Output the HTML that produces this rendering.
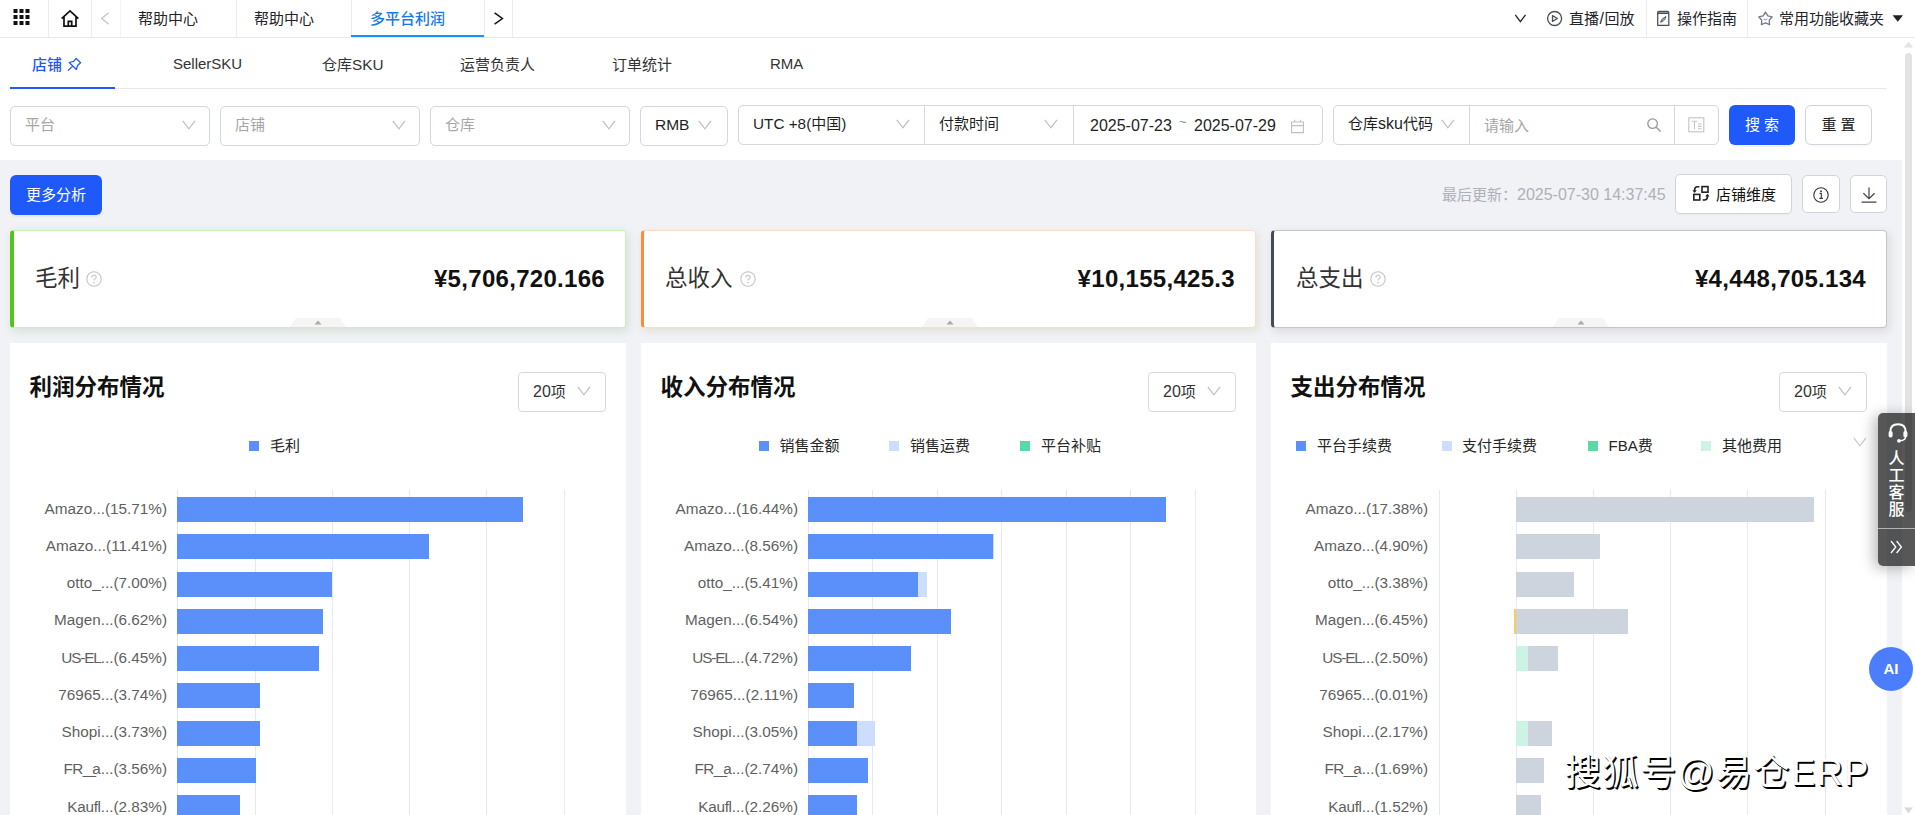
<!DOCTYPE html>
<html lang="zh-CN">
<head>
<meta charset="utf-8">
<title>多平台利润</title>
<style>
*{box-sizing:border-box;margin:0;padding:0}
html,body{width:1915px;height:815px;overflow:hidden;background:#f0f2f5;
  font-family:"Liberation Sans","Noto Sans CJK SC",sans-serif;color:#1f1f1f;font-size:15px}
.abs{position:absolute}
.lat{font-size:16px}
#root{position:relative;width:1915px;height:815px;overflow:hidden;background:#f0f2f5}
/* top bar */
#top{left:0;top:0;width:1915px;height:38px;background:#fff;border-bottom:1px solid #e8e8e8}
.vsep{position:absolute;top:0;width:1px;height:37px;background:#eaecf0}
.ttab{position:absolute;top:0;height:37px;line-height:37px;font-size:15px;color:#1f232b;white-space:nowrap}
/* white section */
#white{left:0;top:38px;width:1902px;height:122px;background:#fff}
.stab{position:absolute;top:48px;height:34px;line-height:34px;font-size:15px;color:#333;white-space:nowrap}
.sel{position:absolute;top:106px;height:40px;border:1px solid #d3d7de;border-radius:5px;background:#fff;font-size:15px;line-height:36px;white-space:nowrap}
.ph{color:#a6a6a6}
.chev{position:absolute;top:13px;width:14px;height:12px}
.btn{position:absolute;border-radius:6px;font-size:15px;text-align:center;white-space:nowrap}
/* cards */
.card{position:absolute;top:230px;height:98px;box-shadow:0 3px 8px rgba(0,0,0,.08);background:#fff;border-radius:4px;border:1px solid #ddd}
.card .lbl{position:absolute;left:21px;top:32px;font-size:22.5px;line-height:32px;color:#333;white-space:nowrap}
.card .val{position:absolute;right:20px;top:30px;font-size:24px;line-height:36px;font-weight:bold;color:#111;white-space:nowrap;letter-spacing:.3px}
.panel{position:absolute;top:343px;height:480px;background:#fff}
.panel h3{position:absolute;left:19.5px;top:29px;font-size:22.5px;line-height:32px;font-weight:bold;color:#111;white-space:nowrap}
.sel20{position:absolute;top:29px;width:88px;height:40px;border:1px solid #d9d9d9;border-radius:4px;font-size:15px;line-height:38px;padding-left:14px;color:#333}
.lg{position:absolute;top:432px;font-size:15px;line-height:28px;color:#262626;white-space:nowrap}
.lgsq{position:absolute;top:441px;width:10px;height:10px}
.yl{position:absolute;font-size:15.3px;line-height:20px;color:#5f5f5f;text-align:right;white-space:nowrap;width:160px}
.bar{position:absolute;height:25px}
.grid{position:absolute;top:490px;width:1px;height:330px;background:#e6e8ee}
.stab.lat{top:47px}
</style>
</head>
<body>
<div id="root">
<div id="top" class="abs">
<svg class="abs" style="left:13px;top:9px" width="17" height="16" viewBox="0 0 17 16"><g fill="#111"><rect x="0.5" y="0" width="4" height="4"/><rect x="6.5" y="0" width="4" height="4"/><rect x="12.5" y="0" width="4" height="4"/><rect x="0.5" y="6" width="4" height="4"/><rect x="6.5" y="6" width="4" height="4"/><rect x="12.5" y="6" width="4" height="4"/><rect x="0.5" y="12" width="4" height="4"/><rect x="6.5" y="12" width="4" height="4"/><rect x="12.5" y="12" width="4" height="4"/></g></svg>
<div class="vsep" style="left:48px"></div>
<svg class="abs" style="left:60px;top:9px" width="20" height="19" viewBox="0 0 20 19"><path d="M1.6 9.6 L10 1.8 L18.4 9.6 M4 8 V17.2 H16 V8 M8.3 17.2 V12.3 H11.7 V17.2" fill="none" stroke="#111" stroke-width="1.7" stroke-linejoin="miter"/></svg>
<div class="vsep" style="left:91px"></div>
<svg class="abs" style="left:100px;top:12px" width="10" height="13" viewBox="0 0 10 13"><path d="M8.7 0.8 L1.6 6.5 L8.7 12.2" fill="none" stroke="#c4c4c4" stroke-width="1.3"/></svg>
<div class="vsep" style="left:120px;background:#f5f5f5"></div>
<div class="ttab" style="left:138px">帮助中心</div>
<div class="vsep" style="left:236px"></div>
<div class="ttab" style="left:254px">帮助中心</div>
<div class="vsep" style="left:351px"></div>
<div class="ttab" style="left:370px;color:#1778ea;font-weight:500">多平台利润</div>
<div class="abs" style="left:351px;top:34.5px;width:133px;height:2.5px;background:#1890ff"></div>
<div class="vsep" style="left:484px"></div>
<svg class="abs" style="left:493px;top:12px" width="12" height="13" viewBox="0 0 12 13"><path d="M1.6 0.8 L9.4 6.5 L1.6 12.2" fill="none" stroke="#111" stroke-width="1.5"/></svg>
<div class="vsep" style="left:512px"></div>
<svg class="abs" style="left:1514px;top:14px" width="13" height="9" viewBox="0 0 13 9"><path d="M1.3 0.8 L6.4 7.6 L11.5 0.8" fill="none" stroke="#222" stroke-width="1.3"/></svg>
<svg class="abs" style="left:1546px;top:10px" width="17" height="17" viewBox="0 0 17 17"><circle cx="8.6" cy="8.5" r="7" fill="none" stroke="#4b4f58" stroke-width="1.35"/><path d="M6.5 5.6 L11.3 8.5 L6.5 11.4 Z" fill="none" stroke="#4b4f58" stroke-width="1.3" stroke-linejoin="round"/></svg>
<div class="ttab" style="left:1569px">直播<span style="padding:0 .5px 0 .5px;font-size:16px">/</span>回放</div>
<div class="vsep" style="left:1646px"></div>
<svg class="abs" style="left:1656px;top:10px" width="15" height="17" viewBox="0 0 15 17"><path d="M1.7 2.4 Q1.7 1.3 2.8 1.3 H11.6 Q12.8 1.3 12.8 2.4 V15.4 H1.7 Z" fill="none" stroke="#4b4f58" stroke-width="1.25"/><path d="M1.7 3.2 H12.8" stroke="#4b4f58" stroke-width="1.7"/><path d="M4.6 12.2 Q5 8.6 9.8 6.6 Q9.6 10.8 4.6 12.2 Z M4.6 12.2 L9.8 6.6" fill="none" stroke="#4b4f58" stroke-width="0.9"/></svg>
<div class="ttab" style="left:1677px">操作指南</div>
<div class="vsep" style="left:1747px"></div>
<svg class="abs" style="left:1757px;top:10px" width="17" height="17" viewBox="0 0 17 17"><path d="M8.5 2.0 L10.8 5.8 L15.2 6.8 L12.2 10.2 L12.6 14.7 L8.5 12.9 L4.4 14.7 L4.8 10.2 L1.8 6.8 L6.2 5.8 Z" fill="none" stroke="#777b84" stroke-width="1.3" stroke-linejoin="round"/><path d="M6.6 9 Q8.5 10.6 10.4 9" fill="none" stroke="#5c7cff" stroke-width="0.9"/></svg>
<div class="ttab" style="left:1779px">常用功能收藏夹</div>
<svg class="abs" style="left:1892px;top:15px" width="12" height="8" viewBox="0 0 12 8"><path d="M0.6 0.3 H11 L5.8 6.8 Z" fill="#222"/></svg>

</div>

<div id="white" class="abs"></div>
<div class="abs" style="left:10px;top:88px;width:1877px;height:1px;background:#e8e8e8"></div>
<div class="abs" style="left:10px;top:86.5px;width:105px;height:2.5px;background:#1f59fa"></div>
<div class="stab" style="left:32px;color:#1f59fa;font-weight:500">店铺</div>
<svg class="abs" style="left:67px;top:57px" width="15" height="15" viewBox="0 0 15 15"><path d="M9.2 1.5 L13.6 5.7 L10.5 8.5 L9.4 12.5 L2.2 5.5 L6.6 4.4 Z M5.8 9 L1.3 13.4" fill="none" stroke="#1f59fa" stroke-width="1.25" stroke-linejoin="round" stroke-linecap="round"/></svg>
<div class="stab lat" style="left:173px">SellerSKU</div>
<div class="stab" style="left:322px">仓库<span class="lat" style="font-size:15.3px">SKU</span></div>
<div class="stab" style="left:460px">运营负责人</div>
<div class="stab" style="left:612px">订单统计</div>
<div class="stab lat" style="left:770px">RMA</div>
<div class="sel" style="left:10px;width:200px"><span class="ph" style="margin-left:14px">平台</span><svg class="abs" style="left:171px;top:13px" width="14" height="10" viewBox="0 0 14 10"><path d="M0.8 0.8 L6.9 8.8 L13 0.8" fill="none" stroke="#bfbfbf" stroke-width="1.2"/></svg></div>
<div class="sel" style="left:220px;width:200px"><span class="ph" style="margin-left:14px">店铺</span><svg class="abs" style="left:171px;top:13px" width="14" height="10" viewBox="0 0 14 10"><path d="M0.8 0.8 L6.9 8.8 L13 0.8" fill="none" stroke="#bfbfbf" stroke-width="1.2"/></svg></div>
<div class="sel" style="left:430px;width:200px"><span class="ph" style="margin-left:14px">仓库</span><svg class="abs" style="left:171px;top:13px" width="14" height="10" viewBox="0 0 14 10"><path d="M0.8 0.8 L6.9 8.8 L13 0.8" fill="none" stroke="#bfbfbf" stroke-width="1.2"/></svg></div>
<div class="sel" style="left:640px;width:88px"><span class="lat" style="margin-left:14px;font-size:15.5px">RMB</span><svg class="abs" style="left:57px;top:13px" width="14" height="10" viewBox="0 0 14 10"><path d="M0.8 0.8 L6.9 8.8 L13 0.8" fill="none" stroke="#bfbfbf" stroke-width="1.2"/></svg></div>
<div class="sel" style="left:738px;top:105px;width:585px"><span style="margin-left:14px"><span class="lat" style="font-size:15.3px">UTC +8(</span>中国<span class="lat" style="font-size:15.3px">)</span></span><svg class="abs" style="left:157px;top:13px" width="14" height="10" viewBox="0 0 14 10"><path d="M0.8 0.8 L6.9 8.8 L13 0.8" fill="none" stroke="#bfbfbf" stroke-width="1.2"/></svg><div class="abs" style="left:185px;top:0;width:1px;height:38px;background:#d9d9d9"></div><span class="abs" style="left:200px;top:0">付款时间</span><svg class="abs" style="left:305px;top:13px" width="14" height="10" viewBox="0 0 14 10"><path d="M0.8 0.8 L6.9 8.8 L13 0.8" fill="none" stroke="#bfbfbf" stroke-width="1.2"/></svg><div class="abs" style="left:334px;top:0;width:1px;height:38px;background:#d9d9d9"></div><span class="abs lat" style="left:351px;top:2px">2025-07-23</span><span class="abs" style="left:440px;top:-2px;color:#888;font-size:13px">~</span><span class="abs lat" style="left:455px;top:2px">2025-07-29</span><svg class="abs" style="left:551px;top:13px" width="15" height="15" viewBox="0 0 15 15"><path d="M1.6 3 H13.4 V13.6 H1.6 Z M1.6 6.6 H13.4 M4.6 0.8 V3 M10.4 0.8 V3" fill="none" stroke="#c0c0c0" stroke-width="1.1"/></svg></div>
<div class="sel" style="left:1333px;top:105px;width:386px"><span style="margin-left:14px">仓库<span class="lat">sku</span>代码</span><svg class="abs" style="left:107px;top:13px" width="14" height="10" viewBox="0 0 14 10"><path d="M0.8 0.8 L6.9 8.8 L13 0.8" fill="none" stroke="#bfbfbf" stroke-width="1.2"/></svg><div class="abs" style="left:135px;top:0;width:1px;height:38px;background:#d9d9d9"></div><span class="abs ph" style="left:150px;top:2px">请输入</span><svg class="abs" style="left:312px;top:11px" width="16" height="16" viewBox="0 0 16 16"><circle cx="6.6" cy="6.6" r="4.8" fill="none" stroke="#999" stroke-width="1.3"/><path d="M10.2 10.2 L14.6 14.6" stroke="#999" stroke-width="1.4"/></svg><div class="abs" style="left:340px;top:0;width:1px;height:38px;background:#d9d9d9"></div><svg class="abs" style="left:354px;top:11px" width="17" height="16" viewBox="0 0 17 16"><rect x="0.8" y="0.8" width="15" height="14" fill="none" stroke="#c4c4c4" stroke-width="1.1"/><path d="M3.6 4.2 H9.4 M6.5 4.2 V12 M10 7 H13.4 M10 9.4 H13.4 M10 11.8 H13.4" fill="none" stroke="#c4c4c4" stroke-width="1.1"/></svg></div>
<div class="btn" style="left:1729px;top:105px;width:66px;height:40px;line-height:40px;background:#1f59fa;color:#fff;box-shadow:0 2px 0 rgba(0,0,0,.045)">搜 索</div>
<div class="btn" style="left:1805px;top:105px;width:67px;height:40px;line-height:38px;background:#fff;border:1px solid #cfd4dc;color:#222;box-shadow:0 2px 0 rgba(0,0,0,.02)">重 置</div>
<div class="abs" style="left:1902px;top:38px;width:13px;height:777px;background:#fff"></div>
<div class="abs" style="left:1905px;top:53px;width:7px;height:459px;background:#e3e3e3;border-radius:3.5px"></div>
<svg class="abs" style="left:1903px;top:41px" width="11" height="8" viewBox="0 0 11 8"><path d="M5.5 0.8 L10 6.6 H1 Z" fill="#e3e3e3"/></svg>
<svg class="abs" style="left:1903px;top:806px" width="11" height="8" viewBox="0 0 11 8"><path d="M5.5 7.2 L10 1.4 H1 Z" fill="#d8d8d8"/></svg>

<div class="btn" style="left:10px;top:175px;width:92px;height:40px;line-height:39px;background:#1f59fa;color:#fff;border-radius:6px;box-shadow:0 2px 0 rgba(0,0,0,.045)">更多分析</div>
<div class="abs" style="left:1442px;top:184px;font-size:15px;line-height:22px;color:#adb1b9;white-space:nowrap">最后更新：<span class="lat">2025-07-30 14:37:45</span></div>
<div class="btn" style="left:1675px;top:174px;width:117px;height:40px;line-height:39.5px;background:#fff;border:1px solid #d0d5dd;border-radius:5px;color:#111;text-align:left;padding-left:40px;box-shadow:0 1px 2px rgba(0,0,0,.04)">店铺维度
<svg class="abs" style="left:16px;top:10px" width="18" height="17" viewBox="0 0 18 17"><g fill="none" stroke="#222" stroke-width="1.6"><rect x="10" y="1.6" width="6" height="5.6"/><rect x="1.8" y="9.4" width="6" height="5.6"/><path d="M7.4 1.8 H5.6 Q2.6 1.8 2.6 5 V7.2"/><path d="M10.6 15 H12.4 Q15.4 15 15.4 11.8 V9.6"/></g><path d="M0.4 5.2 H4.8 L2.6 7.8 Z M13.2 11.6 H17.6 L15.4 9 Z" fill="#222"/></svg></div>
<div class="btn" style="left:1802px;top:175px;width:38px;height:38px;background:#fff;border:1px solid #d0d5dd;border-radius:5px"><svg class="abs" style="left:9px;top:10px" width="18" height="18" viewBox="0 0 18 18"><circle cx="9" cy="9" r="7.2" fill="none" stroke="#333" stroke-width="1.1"/><path d="M7.6 7.4 H9.3 V12.2 M7.4 12.4 H11" fill="none" stroke="#333" stroke-width="1.1"/><circle cx="9" cy="5.2" r="0.9" fill="#333"/></svg></div>
<div class="btn" style="left:1850px;top:175px;width:37px;height:38px;background:#fff;border:1px solid #d0d5dd;border-radius:5px"><svg class="abs" style="left:9px;top:10px" width="18" height="18" viewBox="0 0 18 18"><path d="M9 1.6 V12.4 M3.4 7.2 L9 12.6 L14.6 7.2 M1.6 16.2 H16.4" fill="none" stroke="#444" stroke-width="1.2"/></svg></div>

<div class="card" style="left:10px;width:616px;border-color:#cdf0bb;border-left:4px solid #52c41a;box-shadow:2px 3px 8px rgba(70,130,50,.16)">
<div class="lbl">毛利</div>
<svg class="abs" style="left:72px;top:40px" width="16" height="16" viewBox="0 0 16 16"><circle cx="8" cy="8" r="7.2" fill="none" stroke="#c4c4c4" stroke-width="1.1"/><path d="M5.8 6.4 Q5.8 4.2 8 4.2 Q10.2 4.2 10.2 6.2 Q10.2 7.4 8.9 8 Q8 8.5 8 9.6" fill="none" stroke="#c4c4c4" stroke-width="1.1"/><circle cx="8" cy="11.6" r="0.8" fill="#c4c4c4"/></svg>
<div class="val">¥5,706,720.166</div>
<svg class="abs" style="left:276px;top:86px" width="56" height="10" viewBox="0 0 56 10"><path d="M0 10 L6 1 H50 L56 10 Z" fill="#f5f5f5"/><path d="M24.5 7.6 L28 3.6 L31.5 7.6 Z" fill="#aaa"/></svg>
</div>
<div class="card" style="left:641px;width:615px;border-color:#ffdcc8;border-left:3px solid #fa8c3a;box-shadow:2px 3px 8px rgba(160,120,40,.15)">
<div class="lbl">总收入</div>
<svg class="abs" style="left:95.5px;top:40px" width="16" height="16" viewBox="0 0 16 16"><circle cx="8" cy="8" r="7.2" fill="none" stroke="#c4c4c4" stroke-width="1.1"/><path d="M5.8 6.4 Q5.8 4.2 8 4.2 Q10.2 4.2 10.2 6.2 Q10.2 7.4 8.9 8 Q8 8.5 8 9.6" fill="none" stroke="#c4c4c4" stroke-width="1.1"/><circle cx="8" cy="11.6" r="0.8" fill="#c4c4c4"/></svg>
<div class="val">¥10,155,425.3</div>
<svg class="abs" style="left:278px;top:86px" width="56" height="10" viewBox="0 0 56 10"><path d="M0 10 L6 1 H50 L56 10 Z" fill="#f5f5f5"/><path d="M24.5 7.6 L28 3.6 L31.5 7.6 Z" fill="#aaa"/></svg>
</div>
<div class="card" style="left:1271px;width:616px;border-color:#c2c5cc;border-left:3px solid #444a56;box-shadow:2px 3px 8px rgba(90,60,60,.14)">
<div class="lbl" style="left:22px">总支出</div>
<svg class="abs" style="left:96px;top:40px" width="16" height="16" viewBox="0 0 16 16"><circle cx="8" cy="8" r="7.2" fill="none" stroke="#c4c4c4" stroke-width="1.1"/><path d="M5.8 6.4 Q5.8 4.2 8 4.2 Q10.2 4.2 10.2 6.2 Q10.2 7.4 8.9 8 Q8 8.5 8 9.6" fill="none" stroke="#c4c4c4" stroke-width="1.1"/><circle cx="8" cy="11.6" r="0.8" fill="#c4c4c4"/></svg>
<div class="val">¥4,448,705.134</div>
<svg class="abs" style="left:279px;top:86px" width="56" height="10" viewBox="0 0 56 10"><path d="M0 10 L6 1 H50 L56 10 Z" fill="#f5f5f5"/><path d="M24.5 7.6 L28 3.6 L31.5 7.6 Z" fill="#aaa"/></svg>
</div>

<div class="panel" style="left:10px;width:616px"><h3>利润分布情况</h3><div class="sel20" style="left:508px"><span class="lat">20</span>项<svg class="abs" style="left:58px;top:13px" width="14" height="10" viewBox="0 0 14 10"><path d="M0.8 0.8 L6.9 8.8 L13 0.8" fill="none" stroke="#bfbfbf" stroke-width="1.2"/></svg></div></div>
<div class="grid" style="left:176.8px"></div><div class="grid" style="left:255.3px"></div><div class="grid" style="left:331.5px"></div><div class="grid" style="left:409.1px"></div><div class="grid" style="left:486.2px"></div><div class="grid" style="left:564.2px"></div>
<div class="yl" style="left:7px;top:498.5px">Amazo...(15.71%)</div><div class="bar" style="left:177.3px;top:497.0px;width:346.0px;background:#5b8ff9"></div>
<div class="yl" style="left:7px;top:535.7px">Amazo...(11.41%)</div><div class="bar" style="left:177.3px;top:534.2px;width:251.5px;background:#5b8ff9"></div>
<div class="yl" style="left:7px;top:573.0px">otto_...(7.00%)</div><div class="bar" style="left:177.3px;top:571.5px;width:154.7px;background:#5b8ff9"></div>
<div class="yl" style="left:7px;top:610.3px">Magen...(6.62%)</div><div class="bar" style="left:177.3px;top:608.8px;width:145.6px;background:#5b8ff9"></div>
<div class="yl" style="left:7px;top:647.5px"><span style="letter-spacing:-1.14px">US-EL</span>...(6.45%)</div><div class="bar" style="left:177.3px;top:646.0px;width:142.1px;background:#5b8ff9"></div>
<div class="yl" style="left:7px;top:684.7px">76965...(3.74%)</div><div class="bar" style="left:177.3px;top:683.2px;width:82.4px;background:#5b8ff9"></div>
<div class="yl" style="left:7px;top:722.0px">Shopi...(3.73%)</div><div class="bar" style="left:177.3px;top:720.5px;width:82.4px;background:#5b8ff9"></div>
<div class="yl" style="left:7px;top:759.3px"><span style="letter-spacing:-.6px">FR</span><span style="letter-spacing:-3.8px">__</span>a...(3.56%)</div><div class="bar" style="left:177.3px;top:757.8px;width:78.5px;background:#5b8ff9"></div>
<div class="yl" style="left:7px;top:796.5px"><span style="letter-spacing:-.3px">Kaufl</span>...(2.83%)</div><div class="bar" style="left:177.3px;top:795.0px;width:62.4px;background:#5b8ff9"></div>
<div class="lgsq" style="left:249px;background:#5b8ff9"></div><div class="lg" style="left:270px">毛利</div>
<div class="panel" style="left:641px;width:615px"><h3>收入分布情况</h3><div class="sel20" style="left:507px"><span class="lat">20</span>项<svg class="abs" style="left:58px;top:13px" width="14" height="10" viewBox="0 0 14 10"><path d="M0.8 0.8 L6.9 8.8 L13 0.8" fill="none" stroke="#bfbfbf" stroke-width="1.2"/></svg></div></div>
<div class="grid" style="left:807.7px"></div><div class="grid" style="left:872.2px"></div><div class="grid" style="left:937.1px"></div><div class="grid" style="left:1001.2px"></div><div class="grid" style="left:1066.1px"></div><div class="grid" style="left:1129.7px"></div><div class="grid" style="left:1195.1px"></div>
<div class="yl" style="left:638px;top:498.5px">Amazo...(16.44%)</div><div class="bar" style="left:808.2px;top:497.0px;width:357.8px;background:#5b8ff9"></div>
<div class="yl" style="left:638px;top:535.7px">Amazo...(8.56%)</div><div class="bar" style="left:992.4px;top:534.2px;width:2.0px;background:#cdddfd"></div><div class="bar" style="left:808.2px;top:534.2px;width:185.2px;background:#5b8ff9"></div>
<div class="yl" style="left:638px;top:573.0px">otto_...(5.41%)</div><div class="bar" style="left:917.5px;top:571.5px;width:9.2px;background:#cdddfd"></div><div class="bar" style="left:808.2px;top:571.5px;width:110.3px;background:#5b8ff9"></div>
<div class="yl" style="left:638px;top:610.3px">Magen...(6.54%)</div><div class="bar" style="left:808.2px;top:608.8px;width:142.9px;background:#5b8ff9"></div>
<div class="yl" style="left:638px;top:647.5px"><span style="letter-spacing:-1.14px">US-EL</span>...(4.72%)</div><div class="bar" style="left:808.2px;top:646.0px;width:102.8px;background:#5b8ff9"></div>
<div class="yl" style="left:638px;top:684.7px">76965...(2.11%)</div><div class="bar" style="left:808.2px;top:683.2px;width:45.8px;background:#5b8ff9"></div>
<div class="yl" style="left:638px;top:722.0px">Shopi...(3.05%)</div><div class="bar" style="left:856.5px;top:720.5px;width:18.4px;background:#cdddfd"></div><div class="bar" style="left:808.2px;top:720.5px;width:49.3px;background:#5b8ff9"></div>
<div class="yl" style="left:638px;top:759.3px"><span style="letter-spacing:-.6px">FR</span><span style="letter-spacing:-3.8px">__</span>a...(2.74%)</div><div class="bar" style="left:808.2px;top:757.8px;width:59.7px;background:#5b8ff9"></div>
<div class="yl" style="left:638px;top:796.5px"><span style="letter-spacing:-.3px">Kaufl</span>...(2.26%)</div><div class="bar" style="left:808.2px;top:795.0px;width:49.3px;background:#5b8ff9"></div>
<div class="lgsq" style="left:759px;background:#5b8ff9"></div><div class="lg" style="left:779.5px">销售金额</div><div class="lgsq" style="left:889px;background:#cdddfd"></div><div class="lg" style="left:910px">销售运费</div><div class="lgsq" style="left:1020px;background:#5ad8a6"></div><div class="lg" style="left:1041px">平台补贴</div>
<div class="panel" style="left:1271px;width:616px"><h3>支出分布情况</h3><div class="sel20" style="left:508px"><span class="lat">20</span>项<svg class="abs" style="left:58px;top:13px" width="14" height="10" viewBox="0 0 14 10"><path d="M0.8 0.8 L6.9 8.8 L13 0.8" fill="none" stroke="#bfbfbf" stroke-width="1.2"/></svg></div></div>
<div class="grid" style="left:1438.5px"></div><div class="grid" style="left:1515.6px"></div><div class="grid" style="left:1592.7px"></div><div class="grid" style="left:1669.8px"></div><div class="grid" style="left:1747.3px"></div><div class="grid" style="left:1824.8px"></div>
<div class="yl" style="left:1268px;top:498.5px">Amazo...(17.38%)</div><div class="bar" style="left:1516.0px;top:497.0px;width:298.0px;background:#ced4de"></div>
<div class="yl" style="left:1268px;top:535.7px">Amazo...(4.90%)</div><div class="bar" style="left:1516.0px;top:534.2px;width:83.7px;background:#ced4de"></div>
<div class="yl" style="left:1268px;top:573.0px">otto_...(3.38%)</div><div class="bar" style="left:1516.0px;top:571.5px;width:57.6px;background:#ced4de"></div>
<div class="yl" style="left:1268px;top:610.3px">Magen...(6.45%)</div><div class="bar" style="left:1514.4px;top:608.8px;width:1.6px;background:#f8cf5a"></div><div class="bar" style="left:1516.0px;top:608.8px;width:111.6px;background:#ced4de"></div>
<div class="yl" style="left:1268px;top:647.5px"><span style="letter-spacing:-1.14px">US-EL</span>...(2.50%)</div><div class="bar" style="left:1526.9px;top:646.0px;width:31.4px;background:#ced4de"></div><div class="bar" style="left:1516.0px;top:646.0px;width:11.9px;background:#cdf3e4"></div>
<div class="yl" style="left:1268px;top:684.7px">76965...(0.01%)</div>
<div class="yl" style="left:1268px;top:722.0px">Shopi...(2.17%)</div><div class="bar" style="left:1526.9px;top:720.5px;width:25.3px;background:#ced4de"></div><div class="bar" style="left:1516.0px;top:720.5px;width:11.9px;background:#cdf3e4"></div>
<div class="yl" style="left:1268px;top:759.3px"><span style="letter-spacing:-.6px">FR</span><span style="letter-spacing:-3.8px">__</span>a...(1.69%)</div><div class="bar" style="left:1516.0px;top:757.8px;width:28.4px;background:#ced4de"></div>
<div class="yl" style="left:1268px;top:796.5px"><span style="letter-spacing:-.3px">Kaufl</span>...(1.52%)</div><div class="bar" style="left:1516.0px;top:795.0px;width:25.4px;background:#ced4de"></div>
<div class="lgsq" style="left:1296px;background:#5b8ff9"></div><div class="lg" style="left:1317px">平台手续费</div><div class="lgsq" style="left:1442px;background:#cdddfd"></div><div class="lg" style="left:1462px">支付手续费</div><div class="lgsq" style="left:1588px;background:#5ad8a6"></div><div class="lg" style="left:1608.5px"><span class="lat" style="font-size:15px">FBA</span>费</div><div class="lgsq" style="left:1701px;background:#cdf3e4"></div><div class="lg" style="left:1722px">其他费用</div>
<svg class="abs" style="left:1853px;top:437px" width="14" height="10" viewBox="0 0 14 10"><path d="M0.8 0.8 L6.9 8.8 L13 0.8" fill="none" stroke="#c8c8c8" stroke-width="1.2"/></svg>
<div class="abs" style="left:1878px;top:413px;width:37px;height:153px;background:rgba(0,0,0,.66);border-radius:5px 0 0 5px;box-shadow:-4px 2px 14px rgba(0,0,0,.28)">
<svg class="abs" style="left:9px;top:9px" width="22" height="22" viewBox="0 0 22 22"><path d="M3.4 12 V9.6 Q3.4 2.2 11 2.2 Q18.6 2.2 18.6 9.6 V12" fill="none" stroke="#fff" stroke-width="2"/><rect x="1.6" y="9" width="4" height="6.6" rx="1.8" fill="#fff"/><rect x="16.4" y="9" width="4" height="6.6" rx="1.8" fill="#fff"/><path d="M18.6 14.6 Q18.6 18.6 13 18.8" fill="none" stroke="#fff" stroke-width="1.4"/><circle cx="12" cy="18.8" r="1.9" fill="#fff"/></svg>
<div class="abs" style="left:10.5px;top:36.5px;width:16px;font-size:16px;line-height:17px;color:#fff;text-align:center;font-weight:500">人<br>工<br>客<br>服</div>
<div class="abs" style="left:0;top:115px;width:37px;height:1px;background:rgba(255,255,255,.55)"></div>
<svg class="abs" style="left:12px;top:127px" width="13" height="14" viewBox="0 0 13 14"><path d="M1 1 L5.8 7 L1 13 M6.6 1 L11.4 7 L6.6 13" fill="none" stroke="#fff" stroke-width="1.3"/></svg>
</div>
<div class="abs" style="left:1869px;top:647px;width:44px;height:44px;border-radius:22px;background:#4a7dff;color:#fff;font-weight:bold;font-size:15px;line-height:44px;text-align:center">AI</div>
<div class="abs" style="left:1565px;top:747px;font-size:36px;line-height:52px;color:#fff;white-space:nowrap;letter-spacing:1.6px;text-shadow:1.5px 1.5px 0 #000,0.5px 0.5px 0 #000">搜狐号@易仓ERP</div>

</div>
</body>
</html>
